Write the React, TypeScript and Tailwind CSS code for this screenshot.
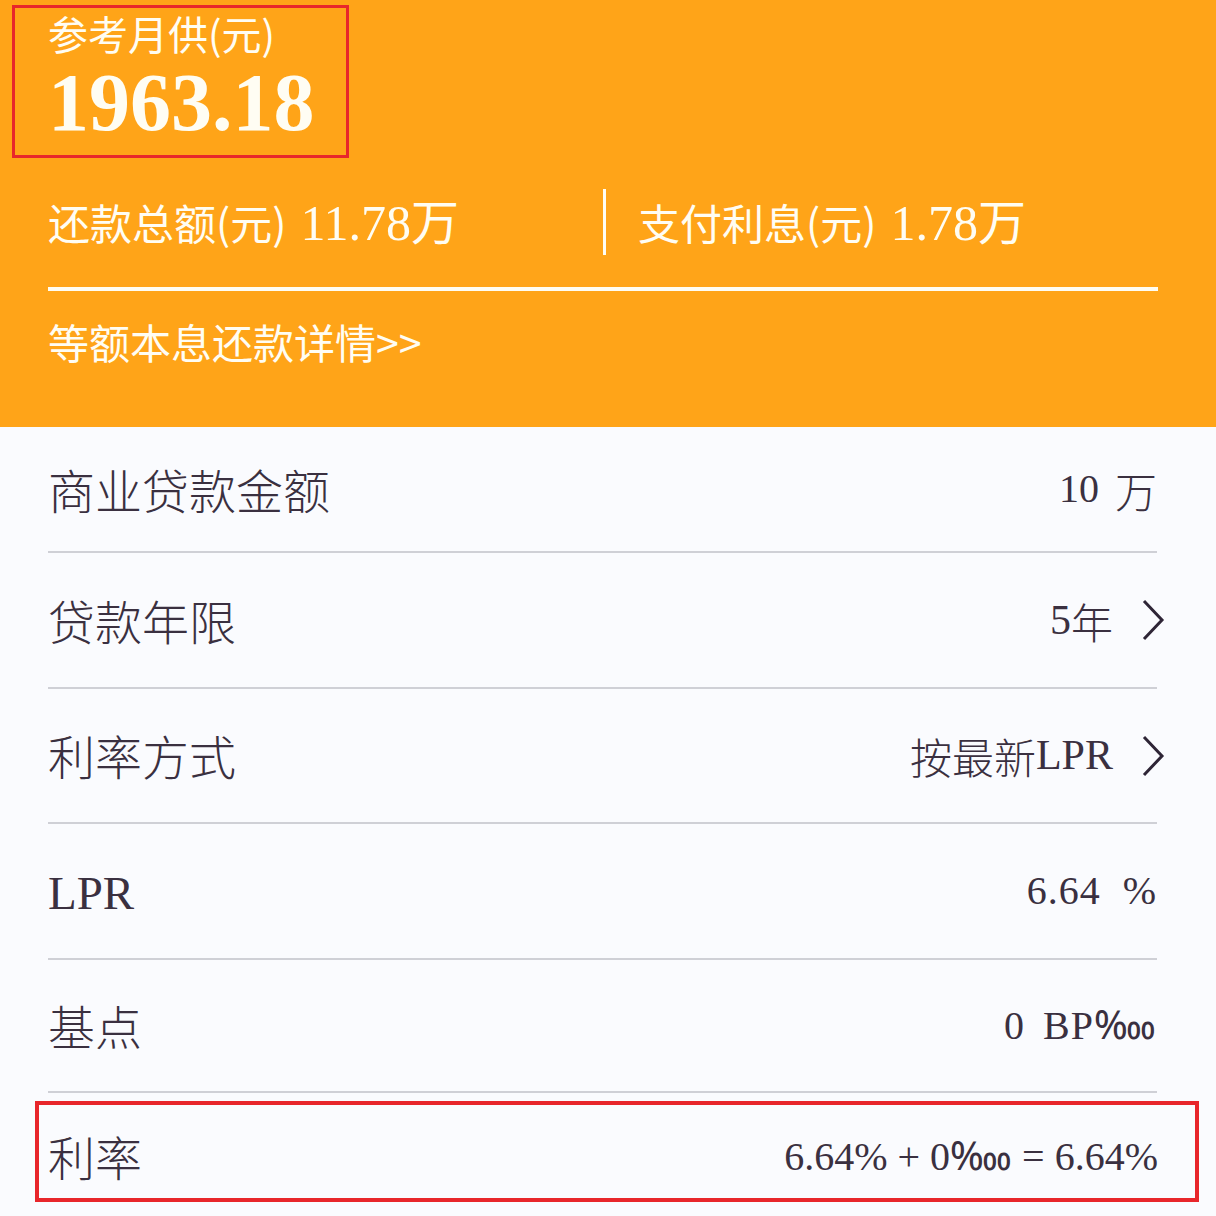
import React from 'react';

const SANS = "font-['Noto_Sans_CJK_SC','Noto_Sans',sans-serif]";
const SERIF = "font-['Liberation_Serif','Noto_Sans_CJK_SC',serif]";

const Chevron = () => (
  <svg width="24" height="42" viewBox="0 0 24 42" className="ml-[28px] mr-[-8px]">
    <path d="M3 2 L21 21 L3 40" fill="none" stroke="#2e2536" strokeWidth="3" />
  </svg>
);

interface RowProps {
  label: React.ReactNode;
  value: React.ReactNode;
  chevron?: boolean;
  height: string;
}

const Row: React.FC<RowProps> = ({ label, value, chevron, height }) => (
  <div className="pl-[48px] pr-[59px]">
    <div className={`flex items-center justify-between ${height}`}>
      <div className="text-[47px] font-light text-[#3a3040]">{label}</div>
      <div className="flex items-center text-[42px] font-light text-[#3a3040]">
        {value}
        {chevron && <Chevron />}
      </div>
    </div>
    <div className="h-[2px] bg-[#cfd0d6]" />
  </div>
);

export default function App() {
  return (
    <div className={`w-[1216px] h-[1216px] overflow-hidden bg-[#fafbfe] ${SANS}`}>
      <div className="h-[427px] bg-[#ffa418] text-[#fffdf3] pt-[5px]">
        <div className="ml-[12px] w-[337px] h-[153px] border-[3px] border-[#e8262b] pl-[33px]">
          <div className="text-[40px] leading-[50px]">参考月供(元)</div>
          <div className={`${SERIF} font-bold text-[82px] leading-[86px] mt-[2px]`}>1963.18</div>
        </div>
        <div className="flex items-center pl-[48px] mt-[30px] h-[68px]">
          <div className="w-[555px] flex items-baseline">
            <span className="text-[42px]">还款总额(元)</span>
            <span className={`${SERIF} text-[50px] ml-[14px]`}>11.78</span>
            <span className="text-[48px]">万</span>
          </div>
          <div className="w-[3px] h-[66px] bg-[#fffdf3]" />
          <div className="flex items-baseline ml-[32px]">
            <span className="text-[42px]">支付利息(元)</span>
            <span className={`${SERIF} text-[50px] ml-[14px]`}>1.78</span>
            <span className="text-[48px]">万</span>
          </div>
        </div>
        <div className="ml-[48px] mr-[58px] mt-[31px] h-[4px] bg-[#fffdf3]" />
        <div className="px-[48px] mt-[20px] text-[41px] leading-[60px]">等额本息还款详情&gt;&gt;</div>
      </div>

      <Row height="h-[124px]" label="商业贷款金额" value={<><span className={`${SERIF} text-[40px]`}>10</span><span className="ml-[16px]">万</span></>} />
      <Row height="h-[134px]" label="贷款年限" chevron value={<><span className={SERIF}>5</span><span>年</span></>} />
      <Row height="h-[133px]" label="利率方式" chevron value={<><span>按最新</span><span className={SERIF}>LPR</span></>} />
      <Row height="h-[134px]" label={<span className={SERIF}>LPR</span>} value={<span className={`${SERIF} text-[40px] tracking-[1px]`}>6.64<span className="ml-[22px]">%</span></span>} />
      <Row height="h-[131px]" label="基点" value={<span className={`${SERIF} text-[40px] tracking-[1px]`}>0<span className="ml-[18px]">BP‱</span></span>} />

      <div className="ml-[35px] mt-[8px] w-[1164px] h-[101px] border-[4px] border-[#e8262b] flex items-center justify-between pl-[9px] pr-[37px] pt-[10px]">
        <div className="text-[47px] font-light text-[#3a3040]">利率</div>
        <div className={`${SERIF} text-[40px] text-[#3a3040]`}>6.64% + 0‱ = 6.64%</div>
      </div>
    </div>
  );
}
